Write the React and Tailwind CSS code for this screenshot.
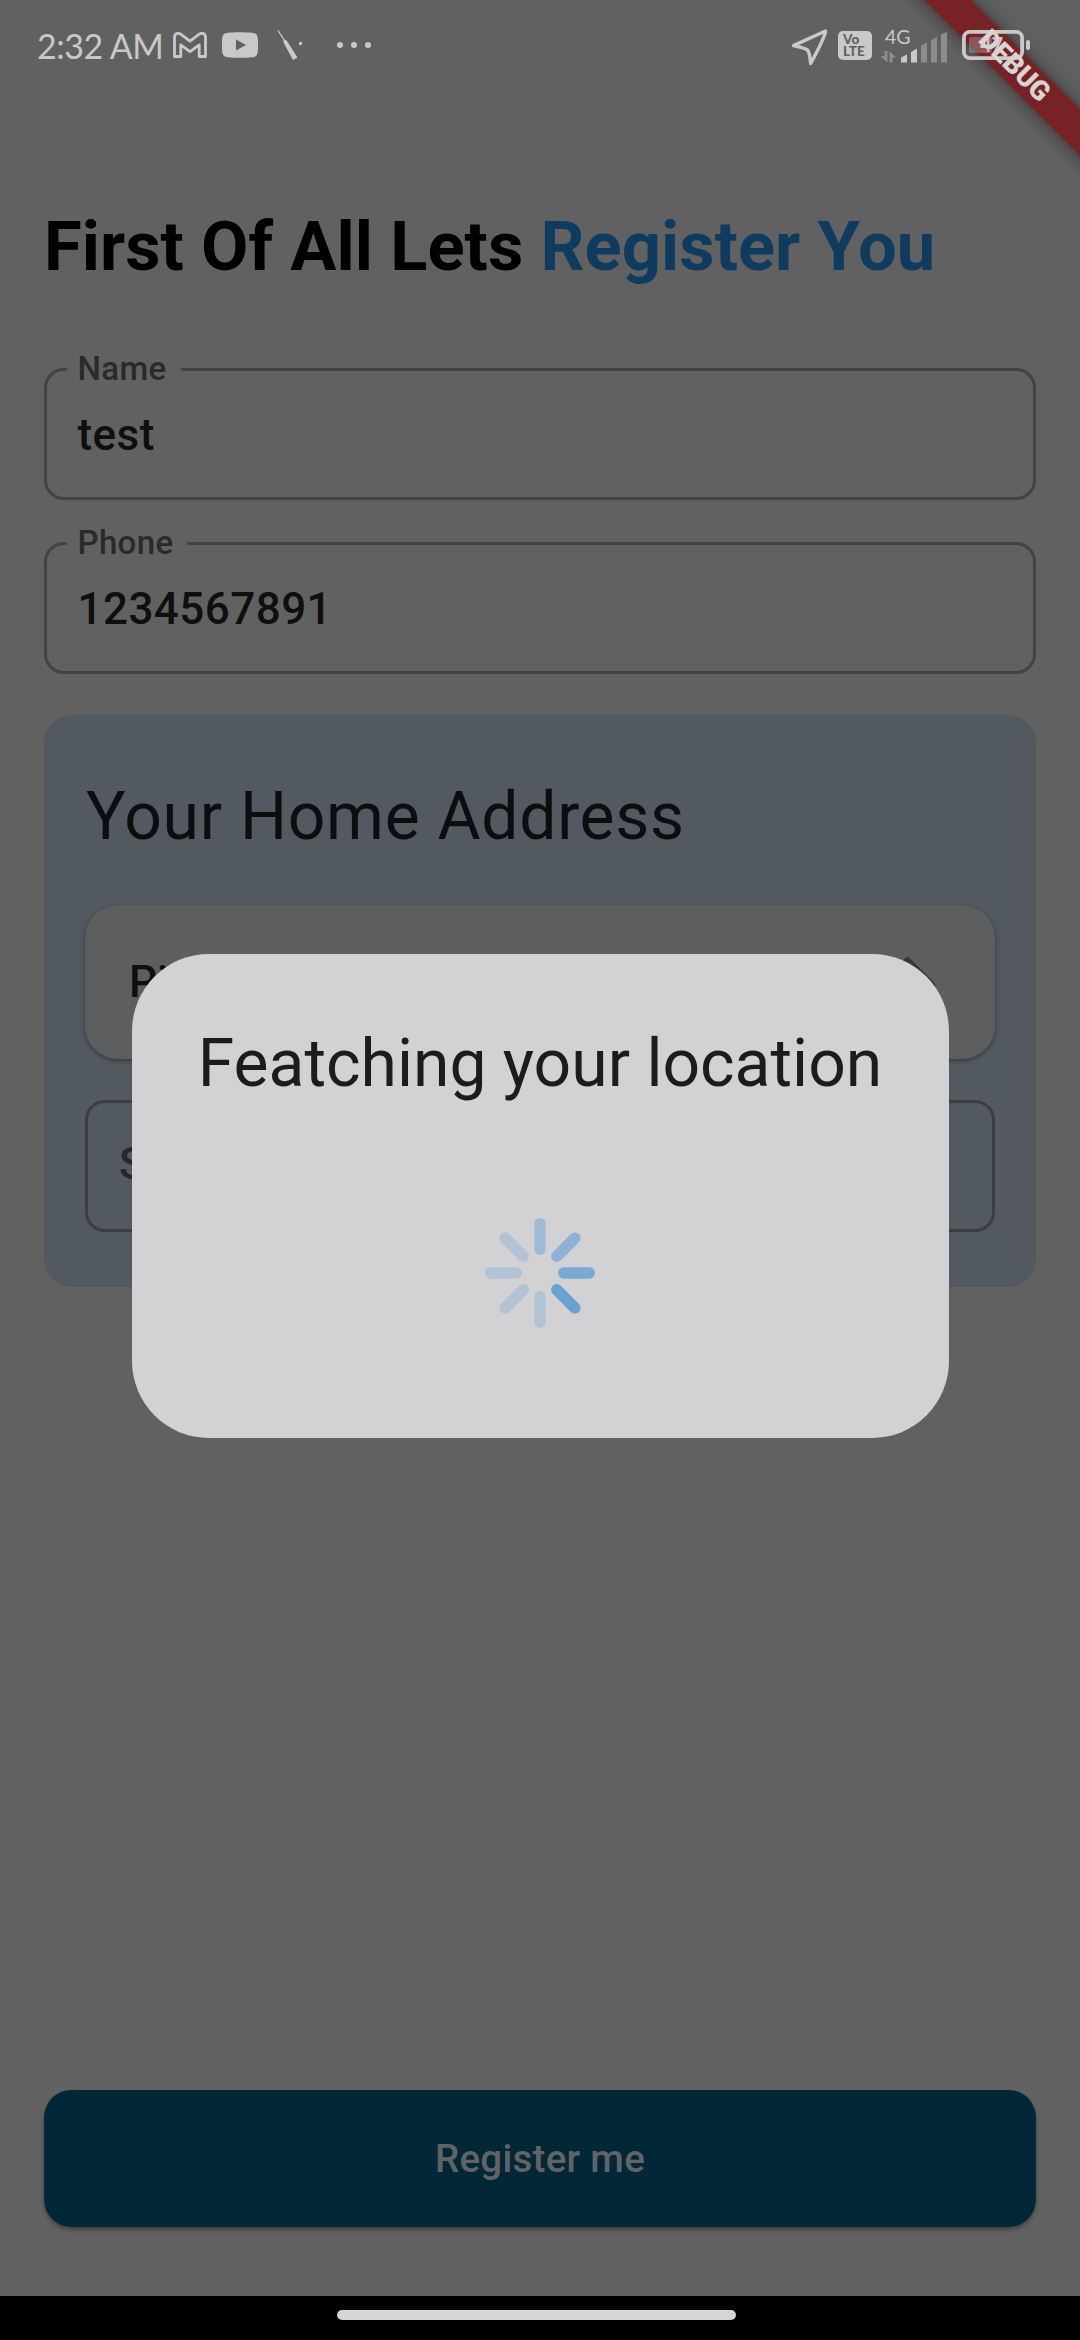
const spokes = [
  { angle: 0, color: "#9fbad5" },
  { angle: 45, color: "#8eb2d3" },
  { angle: 90, color: "#7aa9d3" },
  { angle: 135, color: "#69a1d1" },
  { angle: 180, color: "#b1c3d4" },
  { angle: 225, color: "#b1c3d4" },
  { angle: 270, color: "#b1c3d4" },
  { angle: 315, color: "#b1c3d4" },
];

function DebugBanner() {
  return (
    <div className="absolute top-0 right-0 h-[220px] w-[220px] overflow-hidden">
      <div className="absolute top-[49.5px] left-[-46px] flex h-[33px] w-[400px] rotate-45 items-center justify-center bg-[#772325] shadow-[0_0_17px_rgba(0,0,0,0.5)]" />
    </div>
  );
}

function DebugLabel() {
  return (
    <div className="absolute top-[49px] left-[915px] flex h-[33px] w-[200px] rotate-45 items-center justify-center text-[27.5px] leading-none font-black text-[#d9d3d4]">
      DEBUG
    </div>
  );
}

function StatusBar() {
  return (
    <header className="relative flex h-[90px] items-center pr-[49px] pl-[37px] text-[#c9c9c9]">
      <span className="w-[136px] font-['Lato','Roboto',sans-serif] text-[34px] leading-[41px] tracking-[-0.5px] whitespace-nowrap">
        2:32 AM
      </span>
      <svg className="mt-px" width="34" height="27" viewBox="0 0 34 27" fill="none" stroke="currentColor" strokeWidth="2.8" strokeLinejoin="round">
        <path d="M1.5 24.5V5.2c0-3.6 3.6-5 6.2-3L17 9.2l9.3-7c2.6-2 6.2-.6 6.2 3v19.3h-6.3V12.8L17 19.6l-9.2-6.8v11.7Z" />
      </svg>
      <svg className="ml-[15px]" width="36" height="26" viewBox="0 0 36 26">
        <path fill="currentColor" fillRule="evenodd" d="M6 .7C12 0 24 0 30 .7c4 .4 5.6 2 5.8 6 .3 4 .3 8.600 0 12.600-.2 4-1.800 5.600-5.800 6-6 .7-18 .7-24 0-4-.4-5.600-2-5.800-6-.3-4-.3-8.600 0-12.600.2-4 1.800-5.600 5.800-6ZM14 7.600v10.800l10-5.400Z" />
      </svg>
      <svg className="ml-[19px]" width="26" height="31" viewBox="0 0 26 31" fill="currentColor">
        <path d="M1.300 0 7.500 9.300l2.300 1.500L20.500 27.500l-4.500 2.600L6.500 12.500V10L.5.9Z" />
        <circle cx="23.500" cy="13.500" r="1.700" />
      </svg>
      <div className="ml-[34px] flex gap-[8px]">
        <span className="size-[6px] rounded-full bg-[#c9c9c9]" />
        <span className="size-[6px] rounded-full bg-[#c9c9c9]" />
        <span className="size-[6px] rounded-full bg-[#c9c9c9]" />
      </div>

      <div className="ml-auto flex items-center">
        <svg className="mt-[3px]" width="38" height="38" viewBox="0 0 38 38" fill="none" stroke="currentColor" strokeWidth="3.400" strokeLinejoin="round">
          <path d="M34.500 3 2.500 17.600c0 0 12 2.500 14 4.400s3.200 13.500 3.200 13.500S34.500 8 34.500 3Z" />
        </svg>
        <div className="ml-[9px] flex h-[29px] w-[34px] flex-col justify-center rounded-[5px] bg-[#c9c9c9] pl-[5px] font-['Lato',sans-serif] text-[13.500px] leading-[12px] font-black text-[#616161]">
          <span>Vo</span>
          <span>LTE</span>
        </div>
        <div className="ml-[8px] flex h-[35px] w-[70px] flex-col">
          <span className="pl-[5px] font-['Lato',sans-serif] text-[19.500px] leading-[17px]">4G</span>
          <svg className="-mt-[13px] shrink-0" width="70" height="31" viewBox="0 0 70 31" fill="currentColor">
            <g className="text-[#8d8d8d]">
              <path d="M4.500 19v5H.5l7 6.500V19ZM9.500 30.500V19l6.500 6.500h-3.500v5Z" />
              <path d="M41 14l6-3.500V30.500h-6ZM51 8.500l6-3.500V30.500h-6ZM61 2.500 67 0V30.500h-6Z" />
            </g>
            <path d="M21 25.500l6-3V30.500h-6ZM31 20l6-3.500V30.500h-6Z" />
          </svg>
        </div>
        <svg className="ml-[12px]" width="69" height="30" viewBox="0 0 69 30">
          <rect x="1.900" y="1.900" width="58.200" height="26.200" rx="6" fill="none" stroke="currentColor" strokeWidth="3.800" />
          <rect x="7" y="7" width="23" height="16" rx="2" fill="currentColor" opacity=".3" />
          <text x="18" y="22" fill="currentColor" fontFamily="Lato" fontWeight="700" fontSize="20">47</text>
          <rect x="64" y="10" width="4" height="10" rx="2" fill="currentColor" />
        </svg>
      </div>
    </header>
  );
}

function Field({ label, value, className }) {
  return (
    <div className={`relative h-[132px] rounded-[20px] border-[3px] border-[#434343] pt-[38px] pl-[30.500px] ${className}`}>
      <span className="absolute -top-[22px] left-[20px] bg-[#616161] pr-[14px] pl-[10.500px] text-[33px] leading-[39px] font-medium tracking-[0.350px] text-[#2a2a2a]">
        {label}
      </span>
      <p className="text-[44px] leading-[52px] font-medium tracking-[0.450px] text-[#0f0f0f]">{value}</p>
    </div>
  );
}

function AddressPanel() {
  return (
    <section className="mt-[41px] rounded-[28px] bg-[#525960] px-[41px] pt-[63px] pb-[55px]">
      <h2 className="pl-px text-[66px] leading-[77px] tracking-[0.720px] text-[#0b0d0f]">Your Home Address</h2>
      <div className="mt-[50px] flex h-[154px] items-center justify-between rounded-[33px] bg-[#5d5e60] pr-[50px] pl-[44px] shadow-[0_2px_5px_rgba(0,0,0,0.350)]">
        <span className="text-[44px] leading-[52px] font-medium text-[#0f0f0f]">Pick location</span>
        <svg className="mt-[4px]" width="76" height="66" viewBox="0 0 76 66" fill="none" stroke="#363636" strokeWidth="6" strokeLinejoin="round">
          <path d="M38.500 9 63 33.500 38.500 58 14 33.500Z" />
        </svg>
      </div>
      <div className="mt-[41px] h-[132px] rounded-[20px] border-[3px] border-[#393e44] pt-[35px] pl-[31px]">
        <span className="text-[44px] leading-[52px] font-medium text-[#24282b]">Street</span>
      </div>
    </section>
  );
}

function LoadingDialog() {
  return (
    <div role="dialog" className="absolute top-[954px] left-[131.500px] flex h-[484px] w-[817px] flex-col items-center rounded-[77px] bg-[#d2d2d4] pt-[71px]">
      <p className="text-[66px] leading-[77px] whitespace-nowrap text-[#1c1c1c]">Featching your location</p>
      <svg className="mt-[115.700px]" width="110" height="110" viewBox="-55 -55 110 110">
        {spokes.map((s) => (
          <rect key={s.angle} x="-5.700" y="-55" width="11.400" height="37" rx="5.700" fill={s.color} transform={`rotate(${s.angle})`} />
        ))}
      </svg>
    </div>
  );
}

export default function App() {
  return (
    <div className="relative flex h-[2340px] w-[1080px] flex-col overflow-hidden bg-[#616161] font-['Roboto',sans-serif]">
      <DebugBanner />
      <StatusBar />
      <DebugLabel />
      <main className="flex flex-1 flex-col px-[44px] pt-[116px] pb-[69px]">
        <h1 className="text-[68.750px] leading-[81px] font-bold tracking-[0.050px] whitespace-nowrap text-black">
          First Of All Lets <span className="text-[#0f3b5e]">Register You</span>
        </h1>
        <Field label="Name" value="test" className="mt-[81px]" />
        <Field label="Phone" value="1234567891" className="mt-[42px]" />
        <AddressPanel />
        <button className="mt-auto h-[137px] rounded-[27.500px] bg-[#022838] text-[38.500px] font-medium tracking-[0.275px] text-[#616465] shadow-[0_3px_4px_rgba(0,0,0,0.300)]">
          Register me
        </button>
      </main>
      <footer className="flex h-[44px] justify-center bg-black pt-[14px] pr-[7px]">
        <div className="h-[10px] w-[399px] rounded-full bg-[#d5d5d5]" />
      </footer>
      <LoadingDialog />
    </div>
  );
}
